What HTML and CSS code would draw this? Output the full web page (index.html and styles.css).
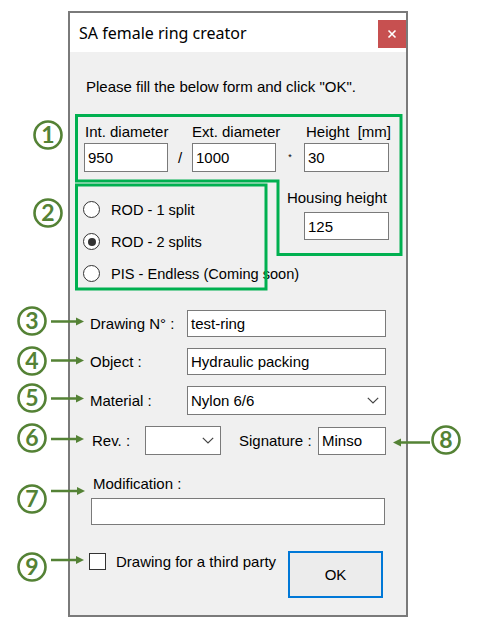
FILE: index.html
```html
<!DOCTYPE html>
<html>
<head>
<meta charset="utf-8">
<title>SA female ring creator</title>
<link rel="stylesheet" href="styles.css">
</head>
<body>
<div class="stage">
  <div class="window">
    <div class="titlebar">
      <span class="title">SA female ring creator</span>
      <span class="close"><svg width="10" height="10" viewBox="0 0 10 10"><path d="M1.5 1.5 L8.5 8.5 M8.5 1.5 L1.5 8.5" stroke="#fff" stroke-width="1.6"/></svg></span>
    </div>
    <div class="client">
      <p class="intro">Please fill the below form and click "OK".</p>

      <div class="dims">
        <span class="lbl l1">Int. diameter</span><span></span><span class="lbl">Ext. diameter</span><span></span><span class="lbl l3">Height&nbsp; [mm]</span>
        <div class="tb">950</div><span class="sep">/</span><div class="tb">1000</div><span class="sep star">*</span><div class="tb">30</div>
      </div>

      <div class="mid">
        <div class="radios">
          <div class="radio"><span class="rb"></span><span>ROD - 1 split</span></div>
          <div class="radio"><span class="rb on"></span><span>ROD - 2 splits</span></div>
          <div class="radio"><span class="rb"></span><span>PIS - Endless (Coming soon)</span></div>
        </div>
        <div class="housing">
          <span class="lbl hl">Housing height</span>
          <div class="tb hb">125</div>
        </div>
      </div>

      <div class="fields">
        <span class="flbl">Drawing N° :</span><div class="tb fb">test-ring</div>
        <span class="flbl">Object :</span><div class="tb fb">Hydraulic packing</div>
        <span class="flbl">Material :</span><div class="tb cb mat"><span>Nylon 6/6</span><svg class="chev" width="12" height="7" viewBox="0 0 12 7"><path d="M0.8 0.8 L6 6 L11.2 0.8" fill="none" stroke="#444" stroke-width="1.2"/></svg></div>
      </div>

      <div class="revrow">
        <span class="revl">Rev. :</span>
        <div class="tb cb rev"><span></span><svg class="chev" width="12" height="7" viewBox="0 0 12 7"><path d="M0.8 0.8 L6 6 L11.2 0.8" fill="none" stroke="#444" stroke-width="1.2"/></svg></div>
        <span class="sigl">Signature :</span>
        <div class="tb sig">Minso</div>
      </div>

      <div class="modif">
        <span class="lbl">Modification :</span>
        <div class="tb mb"></div>
      </div>

      <div class="bottom">
        <div class="check"><span class="cbx"></span><span>Drawing for a third party</span></div>
        <div class="ok">OK</div>
      </div>
    </div>
  </div>

  <svg class="annot" width="477" height="631" viewBox="0 0 477 631">
    <g fill="none" stroke="#00b050" stroke-width="3">
      <polygon points="76.5,115.5 401,115.5 401,254.5 278,254.5 278,181 76.5,181"/>
      <rect x="76.5" y="185" width="189.5" height="104"/>
    </g>
    <g fill="none" stroke="#548235" stroke-width="2.6">
      <circle cx="48" cy="135" r="13.5"/>
      <circle cx="48" cy="213" r="13.5"/>
      <circle cx="32" cy="321" r="13.5"/>
      <circle cx="32" cy="361" r="13.5"/>
      <circle cx="32" cy="398" r="13.5"/>
      <circle cx="32" cy="438" r="13.5"/>
      <circle cx="32" cy="499" r="13.5"/>
      <circle cx="446" cy="440" r="13.5"/>
      <circle cx="32" cy="567" r="13.5"/>
      <path d="M51 321.5 H77 M51 360.5 H77 M51 398.5 H77 M51 439 H77 M51 491 H78 M51 560 H77 M430 442.5 H400"/>
    </g>
    <g fill="#548235">
      <polygon points="84,321.5 76,317.5 76,325.5"/>
      <polygon points="84,360.5 76,356.5 76,364.5"/>
      <polygon points="84,398.5 76,394.5 76,402.5"/>
      <polygon points="84,439 76,435 76,443"/>
      <polygon points="85,491 77,487 77,495"/>
      <polygon points="84,560 76,556 76,564"/>
      <polygon points="393,442.5 401,438.5 401,446.5"/>
    </g>
    <g class="num" fill="#548235" text-anchor="middle">
      <text x="48" y="143">1</text>
      <text x="48" y="221">2</text>
      <text x="32" y="329">3</text>
      <text x="32" y="369">4</text>
      <text x="32" y="406">5</text>
      <text x="32" y="446">6</text>
      <text x="32" y="507">7</text>
      <text x="446" y="448">8</text>
      <text x="32" y="575">9</text>
    </g>
  </svg>
</div>
</body>
</html>
```
FILE: styles.css
```css
* { box-sizing: border-box; }
body {
  margin: 0;
  background: #fff;
  font-family: "Liberation Sans", Arial, sans-serif;
  font-size: 15px;
  color: #000;
}
.stage { position: relative; width: 477px; height: 631px; overflow: hidden; }
.window {
  margin: 11px 0 0 68px;
  width: 340px;
  height: 606px;
  border: 2px solid #7a7a7a;
  display: flex;
  flex-direction: column;
}
.titlebar {
  height: 39px;
  background: #fff;
  display: flex;
  align-items: center;
  padding-left: 9px;
}
.title {
  font-family: "Noto Sans", "Open Sans", sans-serif;
  font-size: 16px;
  color: #000;
}
.close {
  margin-left: auto;
  align-self: flex-start;
  margin-top: 7px;
  width: 28px;
  height: 28px;
  background: #c75050;
  display: flex;
  align-items: center;
  justify-content: center;
}
.client {
  flex: 1;
  background: #f0f0f0;
  padding-left: 14px;
}
.intro { margin: 27px 0 0 2px; line-height: 16px; white-space: nowrap; }
.lbl { line-height: 16px; white-space: nowrap; }
.tb {
  background: #fff;
  border: 1px solid #7a7a7a;
  padding-left: 3px;
  display: flex;
  align-items: center;
  white-space: nowrap;
}
.dims {
  margin-top: 29px;
  display: grid;
  grid-template-columns: 84px 24px 84px 28px 85px;
  grid-template-rows: 16px 29px;
  row-gap: 3px;
}
.l1 { padding-left: 1px; }
.l3 { padding-left: 2px; }
.sep { display: flex; align-items: center; justify-content: center; }
.star { font-size: 9px; align-items: flex-start; padding-top: 9px; }
.mid {
  width: 305px;
  display: grid;
  grid-template-columns: minmax(0, 1fr) 101px;
  align-items: start;
}
.radios {
  margin: 27px 0 0 -1px;
  display: flex;
  flex-direction: column;
  gap: 11px;
}
.radio { display: flex; align-items: center; height: 21px; gap: 11px; white-space: nowrap; font-size: 14.6px; }
.rb {
  flex: none;
  width: 17px;
  height: 17px;
  border: 1px solid #333;
  border-radius: 50%;
  background: #fff;
  display: flex;
  align-items: center;
  justify-content: center;
}
.rb.on::after {
  content: "";
  width: 8px;
  height: 8px;
  border-radius: 50%;
  background: #333;
}
.housing {
  margin-top: 18px;
  display: flex;
  flex-direction: column;
  align-items: flex-end;
  gap: 6px;
}
.hl { padding-right: 2px; }
.hb { width: 85px; height: 28px; }
.fields {
  margin-top: 26px;
  padding-left: 6px;
  display: grid;
  grid-template-columns: 97px 199px;
  grid-template-rows: 27px 27px 29px;
  row-gap: 11px;
  align-items: center;
}
.fb { height: 27px; }
.cb { height: 29px; justify-content: space-between; padding-right: 6px; }
.revrow {
  margin-top: 11px;
  padding-left: 8px;
  height: 29px;
  display: flex;
  align-items: center;
}
.revl { width: 53px; }
.rev { width: 76px; }
.sigl { margin-left: 18px; width: 79px; }
.sig { width: 68px; height: 28px; }
.modif {
  margin-top: 21px;
  padding-left: 9px;
  display: flex;
  flex-direction: column;
  align-items: flex-start;
  gap: 6px;
}
.mb { width: 294px; height: 27px; margin-left: -2px; }
.bottom {
  margin-top: 26px;
  padding-left: 5px;
  display: grid;
  grid-template-columns: 199px 95px;
  align-items: start;
}
.check { display: flex; align-items: center; height: 20px; gap: 10px; white-space: nowrap; }
.cbx { flex: none; width: 17px; height: 17px; border: 1px solid #333; background: #fff; }
.ok {
  height: 47px;
  border: 2px solid #0078d7;
  background: #ececec;
  display: flex;
  align-items: center;
  justify-content: center;
}
.annot { position: absolute; left: 0; top: 0; pointer-events: none; }
.num text {
  font-family: "Lato", "Liberation Sans", sans-serif;
  font-weight: 700;
  font-size: 23px;
}
```
